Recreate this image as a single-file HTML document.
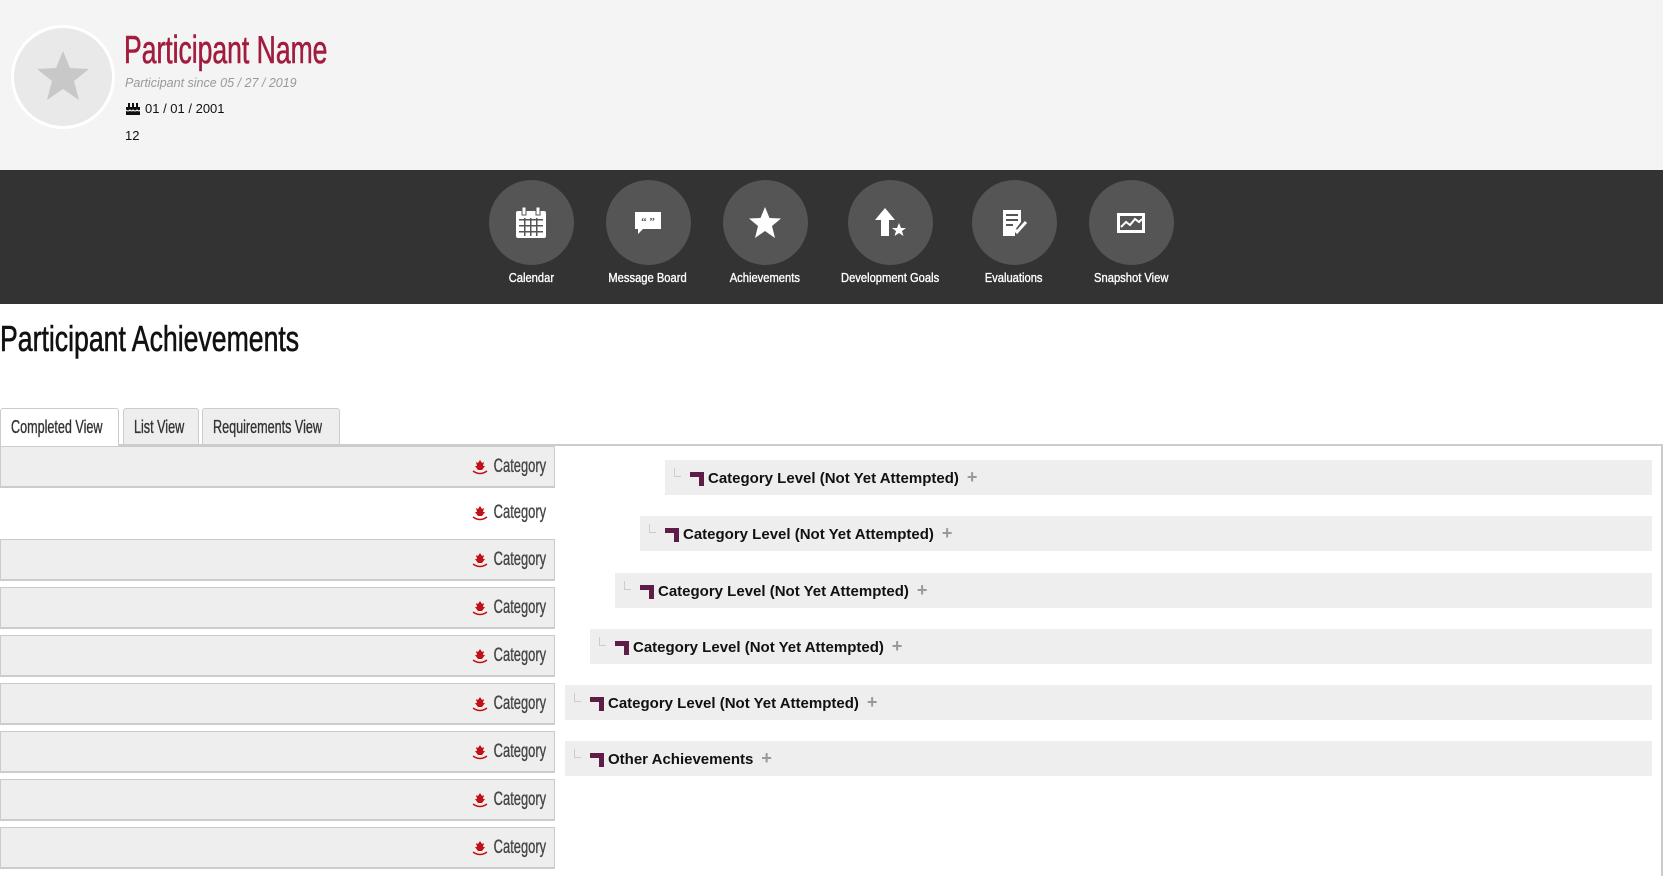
<!DOCTYPE html>
<html><head><meta charset="utf-8"><style>
*{margin:0;padding:0;box-sizing:border-box}
body{width:1663px;height:876px;overflow:hidden;background:#fff;font-family:"Liberation Sans",sans-serif;position:relative}
.cx{display:inline-block;white-space:nowrap;transform-origin:left center;-webkit-text-stroke:0.35px currentColor}
.hdr{position:absolute;left:0;top:0;width:1663px;height:170px;background:#f4f4f4}
.av{position:absolute;left:11px;top:25px;width:104px;height:104px;border-radius:50%;background:#e9e9e9;border:3px solid #fff}
.name{position:absolute;left:124px;top:29px;font-size:39px;color:#a11c3d;white-space:nowrap}
.name .cx{transform:scaleX(.68);-webkit-text-stroke:0.6px currentColor}
.since{position:absolute;left:125px;top:76px;font-size:12.5px;font-style:italic;color:#999}
.bd{position:absolute;left:125px;top:101px;font-size:13px;color:#111}
.twelve{position:absolute;left:125px;top:128px;font-size:13px;color:#111}
.nav{position:absolute;left:0;top:170px;width:1663px;height:134px;background:#333}
.it{position:absolute;top:10px;width:160px;margin-left:-80px;text-align:center}
.c{width:85px;height:85px;border-radius:50%;background:#555;margin:0 auto;display:flex;align-items:center;justify-content:center}
.lbl{color:#fff;font-size:13px;margin-top:5px;white-space:nowrap}
.lbl .cx{transform:scaleX(.86);transform-origin:center}
h1{position:absolute;left:0;top:318px;font-weight:normal;font-size:36px;color:#111;white-space:nowrap}
h1 .cx{transform:scaleX(.74);-webkit-text-stroke:0.6px currentColor}
.tab{position:absolute;top:408px;height:37px;border:1px solid #ccc;border-bottom:none;border-radius:3px 3px 0 0;background:#eee;font-size:18px;color:#333;line-height:36px;white-space:nowrap;padding-left:10px}
.tab .cx{transform:scaleX(.7)}
.panel{position:absolute;left:0;top:444px;width:1663px;height:432px;border-top:2px solid #ccc;border-right:2px solid #ccc}
.row{position:absolute;left:0;width:555px;height:42px;background:#eee;border:1px solid #ccc;border-width:1px 1px 2px 1px;text-align:right;padding-right:8px;font-size:19px;color:#444;line-height:40px;white-space:nowrap}
.row .cx{transform:scaleX(.68);transform-origin:right center}
.row.w{background:#fff;border-color:transparent}
.row svg{position:absolute;left:471px;top:12px}
.lv{position:absolute;height:35px;background:#eee;right:11px;font-size:15px;font-weight:bold;color:#111;line-height:35px;white-space:nowrap}
.lv .cn{display:inline-block;width:7px;height:9px;border-left:1px solid #ccc;border-bottom:1px solid #ccc;margin:0 8px 0 9px;vertical-align:6px}
.lv svg{vertical-align:-3px;margin-right:3px}
.pl{color:#999;font-size:18px;margin-left:8px;font-weight:bold}
</style></head><body>
<div class="hdr">
<div class="av"><svg width="98" height="98" viewBox="0 0 98 98"><polygon points="49,23 56,40 75,41 60,53 65,72 49,61 33,72 38,53 23,41 42,40" fill="#c8c8c8"/></svg></div>
<div class="name"><span class="cx">Participant Name</span></div>
<div class="since">Participant since 05 / 27 / 2019</div>
<div class="bd"><svg width="16" height="14" viewBox="0 0 16 14" style="vertical-align:-2px;margin-right:4px"><rect x="1" y="6" width="14" height="8" fill="#111"/><rect x="3" y="2" width="2" height="4" fill="#111"/><rect x="7" y="2" width="2" height="4" fill="#111"/><rect x="11" y="2" width="2" height="4" fill="#111"/><path d="M1 9 q2 2 4 0 q2 2 3 0 q2 2 4 0 q2 2 3 0" stroke="#fff" fill="none"/></svg>01 / 01 / 2001</div>
<div class="twelve">12</div>
</div>
<div class="nav">
<div class="it" style="left:531px"><div class="c"><svg width="34" height="34" viewBox="0 0 34 34"><rect x="2" y="5" width="30" height="27" rx="2" fill="#fff"/><rect x="8" y="1" width="4" height="8" fill="#fff" stroke="#555"/><rect x="22" y="1" width="4" height="8" fill="#fff" stroke="#555"/><g fill="#555"><rect x="5" y="13" width="24" height="1.5"/><rect x="5" y="19" width="24" height="1.5"/><rect x="5" y="25" width="24" height="1.5"/><rect x="10" y="12" width="1.5" height="18"/><rect x="16" y="12" width="1.5" height="18"/><rect x="22" y="12" width="1.5" height="18"/></g></svg></div><div class="lbl"><span class="cx">Calendar</span></div></div>
<div class="it" style="left:648px"><div class="c"><svg width="30" height="30" viewBox="0 0 30 30"><path d="M2 4h26v17H10l-5 5v-5H2z" fill="#fff"/><text x="15" y="17" font-size="11" font-weight="bold" text-anchor="middle" fill="#555" font-family="Liberation Serif">“ ”</text></svg></div><div class="lbl"><span class="cx">Message Board</span></div></div>
<div class="it" style="left:765px"><div class="c"><svg width="36" height="36" viewBox="0 0 36 36"><polygon points="18,2 22.5,13 34,13.5 25,21 28,33 18,26 8,33 11,21 2,13.5 13.5,13" fill="#fff"/></svg></div><div class="lbl"><span class="cx">Achievements</span></div></div>
<div class="it" style="left:890px"><div class="c"><svg width="34" height="34" viewBox="0 0 34 34"><path d="M12 2L2 14h6v16h8V14h6z" fill="#fff"/><polygon points="26,17 28,22 33,22 29,25 30.5,30 26,27 21.5,30 23,25 19,22 24,22" fill="#fff"/></svg></div><div class="lbl"><span class="cx">Development Goals</span></div></div>
<div class="it" style="left:1014px"><div class="c"><svg width="30" height="30" viewBox="0 0 30 30"><path d="M4 2h18v12l-6 8v6H4z" fill="#fff"/><g fill="#555"><rect x="7" y="6" width="12" height="2"/><rect x="7" y="11" width="12" height="2"/><rect x="7" y="16" width="7" height="2"/></g><path d="M14 20l4 4 9-10" stroke="#fff" stroke-width="3" fill="none"/></svg></div><div class="lbl"><span class="cx">Evaluations</span></div></div>
<div class="it" style="left:1131px"><div class="c"><svg width="30" height="26" viewBox="0 0 30 26"><rect x="1" y="3" width="28" height="20" fill="#fff"/><rect x="4" y="6" width="22" height="14" fill="#555"/><path d="M5 17l5-5 4 3 5-6 4 3 3-3" stroke="#fff" stroke-width="2" fill="none"/></svg></div><div class="lbl"><span class="cx">Snapshot View</span></div></div>
</div>
<h1><span class="cx">Participant Achievements</span></h1>
<div class="tab" style="left:0;width:119px;background:#fff;height:38px;z-index:2"><span class="cx">Completed View</span></div>
<div class="tab" style="left:123px;width:76px"><span class="cx">List View</span></div>
<div class="tab" style="left:202px;width:138px"><span class="cx">Requirements View</span></div>
<div class="panel"></div>
<div class="row" style="top:446px"><svg width="16" height="16" viewBox="0 0 16 16"><path d="M8 1l2 3 2-1-1 4 2 0-3 4H6L3 7h2L4 3l2 1z" fill="#c0101a"/><path d="M1 12q7 5 14 0" stroke="#c0101a" stroke-width="1.5" fill="none"/></svg><span class="cx">Category</span></div>
<div class="row w" style="top:492px"><svg width="16" height="16" viewBox="0 0 16 16"><path d="M8 1l2 3 2-1-1 4 2 0-3 4H6L3 7h2L4 3l2 1z" fill="#c0101a"/><path d="M1 12q7 5 14 0" stroke="#c0101a" stroke-width="1.5" fill="none"/></svg><span class="cx">Category</span></div>
<div class="row" style="top:539px"><svg width="16" height="16" viewBox="0 0 16 16"><path d="M8 1l2 3 2-1-1 4 2 0-3 4H6L3 7h2L4 3l2 1z" fill="#c0101a"/><path d="M1 12q7 5 14 0" stroke="#c0101a" stroke-width="1.5" fill="none"/></svg><span class="cx">Category</span></div>
<div class="row" style="top:587px"><svg width="16" height="16" viewBox="0 0 16 16"><path d="M8 1l2 3 2-1-1 4 2 0-3 4H6L3 7h2L4 3l2 1z" fill="#c0101a"/><path d="M1 12q7 5 14 0" stroke="#c0101a" stroke-width="1.5" fill="none"/></svg><span class="cx">Category</span></div>
<div class="row" style="top:635px"><svg width="16" height="16" viewBox="0 0 16 16"><path d="M8 1l2 3 2-1-1 4 2 0-3 4H6L3 7h2L4 3l2 1z" fill="#c0101a"/><path d="M1 12q7 5 14 0" stroke="#c0101a" stroke-width="1.5" fill="none"/></svg><span class="cx">Category</span></div>
<div class="row" style="top:683px"><svg width="16" height="16" viewBox="0 0 16 16"><path d="M8 1l2 3 2-1-1 4 2 0-3 4H6L3 7h2L4 3l2 1z" fill="#c0101a"/><path d="M1 12q7 5 14 0" stroke="#c0101a" stroke-width="1.5" fill="none"/></svg><span class="cx">Category</span></div>
<div class="row" style="top:731px"><svg width="16" height="16" viewBox="0 0 16 16"><path d="M8 1l2 3 2-1-1 4 2 0-3 4H6L3 7h2L4 3l2 1z" fill="#c0101a"/><path d="M1 12q7 5 14 0" stroke="#c0101a" stroke-width="1.5" fill="none"/></svg><span class="cx">Category</span></div>
<div class="row" style="top:779px"><svg width="16" height="16" viewBox="0 0 16 16"><path d="M8 1l2 3 2-1-1 4 2 0-3 4H6L3 7h2L4 3l2 1z" fill="#c0101a"/><path d="M1 12q7 5 14 0" stroke="#c0101a" stroke-width="1.5" fill="none"/></svg><span class="cx">Category</span></div>
<div class="row" style="top:827px"><svg width="16" height="16" viewBox="0 0 16 16"><path d="M8 1l2 3 2-1-1 4 2 0-3 4H6L3 7h2L4 3l2 1z" fill="#c0101a"/><path d="M1 12q7 5 14 0" stroke="#c0101a" stroke-width="1.5" fill="none"/></svg><span class="cx">Category</span></div>

<div class="lv" style="left:665px;top:460px"><span class="cn"></span><svg width="16" height="16" viewBox="0 0 16 16"><path d="M1 2h14v14h-5V7H1z" fill="#5e1d47"/></svg>Category Level (Not Yet Attempted)<span class="pl">+</span></div>
<div class="lv" style="left:640px;top:516px"><span class="cn"></span><svg width="16" height="16" viewBox="0 0 16 16"><path d="M1 2h14v14h-5V7H1z" fill="#5e1d47"/></svg>Category Level (Not Yet Attempted)<span class="pl">+</span></div>
<div class="lv" style="left:615px;top:573px"><span class="cn"></span><svg width="16" height="16" viewBox="0 0 16 16"><path d="M1 2h14v14h-5V7H1z" fill="#5e1d47"/></svg>Category Level (Not Yet Attempted)<span class="pl">+</span></div>
<div class="lv" style="left:590px;top:629px"><span class="cn"></span><svg width="16" height="16" viewBox="0 0 16 16"><path d="M1 2h14v14h-5V7H1z" fill="#5e1d47"/></svg>Category Level (Not Yet Attempted)<span class="pl">+</span></div>
<div class="lv" style="left:565px;top:685px"><span class="cn"></span><svg width="16" height="16" viewBox="0 0 16 16"><path d="M1 2h14v14h-5V7H1z" fill="#5e1d47"/></svg>Category Level (Not Yet Attempted)<span class="pl">+</span></div>
<div class="lv" style="left:565px;top:741px"><span class="cn"></span><svg width="16" height="16" viewBox="0 0 16 16"><path d="M1 2h14v14h-5V7H1z" fill="#5e1d47"/></svg>Other Achievements<span class="pl">+</span></div>
</body></html>
